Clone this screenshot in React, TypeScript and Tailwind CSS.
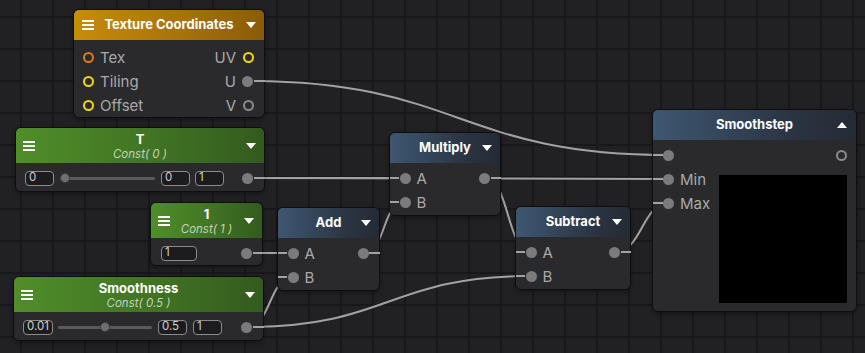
import React from "react";

type Wire = [number, number, number, number];

// connections between port centres, drawn under the nodes
const wires: Wire[] = [
  [248, 81, 669, 155],
  [248, 178, 405, 178],
  [248, 178, 669, 179],
  [247, 253, 293, 253],
  [247, 327, 293, 277],
  [247, 327, 531, 276],
  [363, 253, 405, 202],
  [485, 178, 531, 252],
  [615, 252, 669, 203],
];

// short bits of wire between a port and the node edge, drawn over the nodes
const stubs: [number, number, number][] = [
  [254, 265, 81],
  [254, 265, 178],
  [253, 263, 253],
  [253, 264, 327],
  [369, 380, 253],
  [491, 501, 178],
  [621, 631, 252],
  [653, 663, 155],
  [653, 663, 179],
  [653, 663, 203],
  [390, 399, 178],
  [390, 399, 202],
  [278, 287, 253],
  [278, 287, 277],
  [516, 525, 252],
  [516, 525, 276],
];

function wirePath([x1, y1, x2, y2]: Wire) {
  const d = Math.max(Math.abs(x2 - x1) * 0.5, 24);
  return `M${x1} ${y1} C${x1 + d} ${y1} ${x2 - d} ${y2} ${x2} ${y2}`;
}

function Hamburger() {
  return (
    <div className="flex w-[12px] flex-col gap-[2px]">
      <div className="h-[2px] bg-white" />
      <div className="h-[2px] bg-white" />
      <div className="h-[2px] bg-white" />
    </div>
  );
}

function TriDown() {
  return <div className="h-0 w-0 border-x-[5px] border-t-[6px] border-x-transparent border-t-white" />;
}

function TriUp() {
  return <div className="h-0 w-0 border-x-[5px] border-b-[6px] border-x-transparent border-b-white" />;
}

function Dot() {
  return <div className="h-[11px] w-[11px] shrink-0 rounded-full bg-[#7b7b7b]" />;
}

function Ring({ className }: { className: string }) {
  return <div className={"h-[11px] w-[11px] shrink-0 rounded-full border-2 " + className} />;
}

function Field({ value, className }: { value: string; className: string }) {
  return (
    <div
      className={
        "flex h-[15px] shrink-0 items-center rounded-[4px] border border-[#8c8c8c] bg-[#1c1c1e] pl-[3px] text-[11.5px] leading-none text-[#cfcfcf] " +
        className
      }
    >
      {value}
    </div>
  );
}

function Slider({ width, knob }: { width: string; knob: string }) {
  return (
    <div className={"relative flex h-[10px] shrink-0 items-center " + width}>
      <div className="h-[3px] w-full rounded-full bg-[#5a5a5a]" />
      <div className={"absolute top-0 h-[10px] w-[10px] rounded-full border border-[#3e3e3e] bg-[#6e6e6e] " + knob} />
    </div>
  );
}

const nodeBox = "absolute overflow-hidden rounded-[6px] border border-[#0e0e10] bg-[#2a2a2d] shadow-[0_2px_4px_rgba(0,0,0,0.35)]";
const blueHead = "bg-[linear-gradient(to_right,#3e5771,#2a3341_70%,#252b34)]";
const greenHead = "bg-[linear-gradient(to_right,#4f8e29,#3f7124_60%,#345a1f)]";
const label = "text-[15px] leading-none text-[#a9a9a9]";

function ConstHeader({ title, sub }: { title: string; sub: string }) {
  return (
    <div className={"grid h-[35px] grid-cols-[16px_1fr_16px] items-center px-[7px] " + greenHead}>
      <Hamburger />
      <div className="flex flex-col items-center">
        <div className="text-[13px] font-bold leading-[16px] text-white">{title}</div>
        <div className="text-[11.5px] italic leading-[14px] text-[#c4d2b6]">{sub}</div>
      </div>
      <div className="flex justify-end pr-[1px]">
        <TriDown />
      </div>
    </div>
  );
}

function SimpleNode({ title, pos }: { title: string; pos: string }) {
  return (
    <div className={nodeBox + " " + pos}>
      <div className={"grid h-[30px] grid-cols-[16px_1fr_16px] items-center px-[8px] " + blueHead}>
        <div />
        <div className="text-center text-[13px] font-bold text-white">{title}</div>
        <div className="flex justify-end">
          <TriDown />
        </div>
      </div>
      <div className="flex flex-col pb-[1px] pt-[3px]">
        <div className="flex h-[24px] items-center justify-between pl-[9.5px] pr-[10px]">
          <div className="flex items-center gap-[6px]">
            <Dot />
            <span className={label}>A</span>
          </div>
          <Dot />
        </div>
        <div className="flex h-[24px] items-center pl-[9.5px]">
          <div className="flex items-center gap-[6px]">
            <Dot />
            <span className={label}>B</span>
          </div>
        </div>
      </div>
    </div>
  );
}

export default function App() {
  return (
    <div className="relative h-[353px] w-[865px] overflow-hidden bg-[#212124] [background-image:linear-gradient(to_right,#18181a_2px,transparent_2px),linear-gradient(to_bottom,#18181a_2px,transparent_2px)] [background-size:32px_32px] [background-position:20px_16px] [font-family:Inter,'Noto_Sans',sans-serif]">
      <svg className="absolute inset-0" width={865} height={353}>
        {wires.map((w, i) => (
          <path key={i} d={wirePath(w)} fill="none" stroke="#a2a2a2" strokeWidth={2} />
        ))}
      </svg>

      {/* Texture Coordinates */}
      <div className={nodeBox + " left-[73px] top-[9px] w-[192px]"}>
        <div className="grid h-[30px] grid-cols-[16px_1fr_16px] items-center bg-[linear-gradient(to_right,#c98b0b,#a8730a_55%,#8a5c09)] px-[8px]">
          <Hamburger />
          <div className="text-center text-[13px] font-bold text-white">Texture Coordinates</div>
          <div className="flex justify-end">
            <TriDown />
          </div>
        </div>
        <div className="flex flex-col pt-[5px]">
          <div className="flex h-[24px] items-center justify-between pl-[8.5px] pr-[10.5px]">
            <div className="flex items-center gap-[6.5px]">
              <Ring className="border-[#e07a12]" />
              <span className={label}>Tex</span>
            </div>
            <div className="flex items-center gap-[6.5px]">
              <span className={label}>UV</span>
              <Ring className="border-[#eddb00]" />
            </div>
          </div>
          <div className="flex h-[24px] items-center justify-between pl-[8.5px] pr-[11px]">
            <div className="flex items-center gap-[6.5px]">
              <Ring className="border-[#eddb00]" />
              <span className={label}>Tiling</span>
            </div>
            <div className="flex items-center gap-[6px]">
              <span className={label}>U</span>
              <Dot />
            </div>
          </div>
          <div className="flex h-[24px] items-center justify-between pl-[8.5px] pr-[10.5px]">
            <div className="flex items-center gap-[6.5px]">
              <Ring className="border-[#eddb00]" />
              <span className={label}>Offset</span>
            </div>
            <div className="flex items-center gap-[6.5px]">
              <span className={label}>V</span>
              <Ring className="border-[#8a8a8a]" />
            </div>
          </div>
        </div>
      </div>

      {/* T */}
      <div className={nodeBox + " left-[15px] top-[127px] w-[250px]"}>
        <ConstHeader title="T" sub="Const( 0 )" />
        <div className="flex h-[28px] items-center pb-[4px] pl-[9px] pr-[11px] pt-[6px]">
          <Field value="0" className="w-[29px]" />
          <div className="ml-[6px]">
            <Slider width="w-[95px]" knob="left-0" />
          </div>
          <Field value="0" className="ml-[6px] w-[29px]" />
          <Field value="1" className="ml-[5px] w-[29px]" />
          <div className="ml-auto">
            <Dot />
          </div>
        </div>
      </div>

      {/* 1 */}
      <div className={nodeBox + " left-[150px] top-[202px] w-[113px]"}>
        <ConstHeader title="1" sub="Const( 1 )" />
        <div className="flex h-[27px] items-center pb-[3px] pl-[10px] pr-[10px] pt-[6px]">
          <Field value="1" className="w-[36px]" />
          <div className="ml-auto">
            <Dot />
          </div>
        </div>
      </div>

      {/* Smoothness */}
      <div className={nodeBox + " left-[13px] top-[276px] w-[251px]"}>
        <ConstHeader title="Smoothness" sub="Const( 0.5 )" />
        <div className="flex h-[28px] items-center pb-[4px] pl-[9px] pr-[11px] pt-[6px]">
          <Field value="0.01" className="w-[30px]" />
          <div className="ml-[5px]">
            <Slider width="w-[94px]" knob="left-[42px]" />
          </div>
          <Field value="0.5" className="ml-[6px] w-[29px]" />
          <Field value="1" className="ml-[6px] w-[29px]" />
          <div className="ml-auto">
            <Dot />
          </div>
        </div>
      </div>

      <SimpleNode title="Add" pos="left-[277px] top-[207px] w-[103px]" />
      <SimpleNode title="Multiply" pos="left-[389px] top-[132px] w-[112px]" />
      <SimpleNode title="Subtract" pos="left-[515px] top-[206px] w-[116px]" />

      {/* Smoothstep */}
      <div className={nodeBox + " left-[652px] top-[109px] w-[205px]"}>
        <div className={"grid h-[30px] grid-cols-[16px_1fr_16px] items-center px-[8px] " + blueHead}>
          <div />
          <div className="text-center text-[13px] font-bold text-white">Smoothstep</div>
          <div className="flex justify-end pr-[1px]">
            <TriUp />
          </div>
        </div>
        <div className="flex flex-col pt-[3px]">
          <div className="flex h-[24px] items-center justify-between pl-[10px] pr-[9.5px]">
            <Dot />
            <Ring className="border-[#8a8a8a]" />
          </div>
          <div className="flex items-start pb-[8px]">
            <div className="flex w-[66px] flex-col">
              <div className="flex h-[24px] items-center gap-[6px] pl-[10px]">
                <Dot />
                <span className={label}>Min</span>
              </div>
              <div className="flex h-[24px] items-center gap-[6px] pl-[10px]">
                <Dot />
                <span className={label}>Max</span>
              </div>
            </div>
            <div className="mt-[8px] h-[128px] w-[128px] bg-black" />
          </div>
        </div>
      </div>

      <svg className="pointer-events-none absolute inset-0" width={865} height={353}>
        {stubs.map(([a, b, y], i) => (
          <line key={i} x1={a} y1={y} x2={b} y2={y} stroke="#a2a2a2" strokeWidth={2} />
        ))}
      </svg>
    </div>
  );
}
